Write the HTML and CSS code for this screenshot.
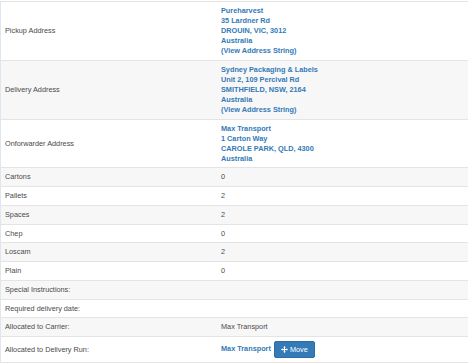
FILE: index.html
```html
<!DOCTYPE html>
<html lang="en">
<head>
    <meta charset="UTF-8">
    <title>Consignment Details</title>
    <link rel="stylesheet" href="styles.css">
</head>
<body>
    <table class="details-table">
        <tbody>
            <tr>
                <td class="label">Pickup Address</td>
                <td class="value">
                    <a href="#" class="address">Pureharvest<br>35 Lardner Rd<br>DROUIN, VIC, 3012<br>Australia<br>(View Address String)</a>
                </td>
            </tr>
            <tr>
                <td class="label">Delivery Address</td>
                <td class="value">
                    <a href="#" class="address">Sydney Packaging &amp; Labels<br>Unit 2, 109 Percival Rd<br>SMITHFIELD, NSW, 2164<br>Australia<br>(View Address String)</a>
                </td>
            </tr>
            <tr>
                <td class="label">Onforwarder Address</td>
                <td class="value">
                    <a href="#" class="address">Max Transport<br>1 Carton Way<br>CAROLE PARK, QLD, 4300<br>Australia</a>
                </td>
            </tr>
            <tr><td class="label">Cartons</td><td class="value">0</td></tr>
            <tr><td class="label">Pallets</td><td class="value">2</td></tr>
            <tr><td class="label">Spaces</td><td class="value">2</td></tr>
            <tr><td class="label">Chep</td><td class="value">0</td></tr>
            <tr><td class="label">Loscam</td><td class="value">2</td></tr>
            <tr><td class="label">Plain</td><td class="value">0</td></tr>
            <tr><td class="label">Special Instructions:</td><td class="value"></td></tr>
            <tr><td class="label">Required delivery date:</td><td class="value"></td></tr>
            <tr><td class="label">Allocated to Carrier:</td><td class="value">Max Transport</td></tr>
            <tr>
                <td class="label">Allocated to Delivery Run:</td>
                <td class="value">
                    <a href="#" class="address">Max Transport</a>
                    <button class="btn-move" type="button">
                        <svg class="icon-move" viewBox="0 0 16 16" width="7" height="7">
                            <path d="M8 0 L11 3.5 H9.2 V6.8 H12.5 V5 L16 8 L12.5 11 V9.2 H9.2 V12.5 H11 L8 16 L5 12.5 H6.8 V9.2 H3.5 V11 L0 8 L3.5 5 V6.8 H6.8 V3.5 H5 Z" fill="#fff"/>
                        </svg>Move
                    </button>
                </td>
            </tr>
        </tbody>
    </table>
</body>
</html>
```

FILE: styles.css
```css
body, html {
    margin: 0;
    padding: 0;
    background: #fff;
    font-family: "Liberation Sans", Arial, Helvetica, sans-serif;
    font-size: 7.3px;
    line-height: 10px;
    color: #4a4a4a;
}
body {
    padding-top: 1px;
}
.details-table {
    width: 100%;
    border-collapse: collapse;
    border-left: 1px solid #dde7f1;
}
.details-table td {
    padding: 4px 4px 3.75px 4px;
    border-top: 1px solid #e4e4e4;
    vertical-align: middle;
}
.details-table tr:last-child td {
    border-bottom: 1px solid #e4e4e4;
}
.details-table tr:nth-child(even) td {
    background: #f7f7f7;
}
.details-table .label {
    width: 208px;
}
.address {
    color: #337ab7;
    font-weight: bold;
    text-decoration: none;
}
.btn-move {
    display: inline-flex;
    align-items: center;
    gap: 2px;
    margin-left: 1px;
    padding: 3px 6px 3px 6px;
    background: #337ab7;
    border: 1px solid #2e6da4;
    border-radius: 2px;
    color: #fff;
    font-family: inherit;
    font-size: 7.3px;
    line-height: 9px;
    cursor: pointer;
    vertical-align: middle;
}
.icon-move {
    display: block;
}
```
